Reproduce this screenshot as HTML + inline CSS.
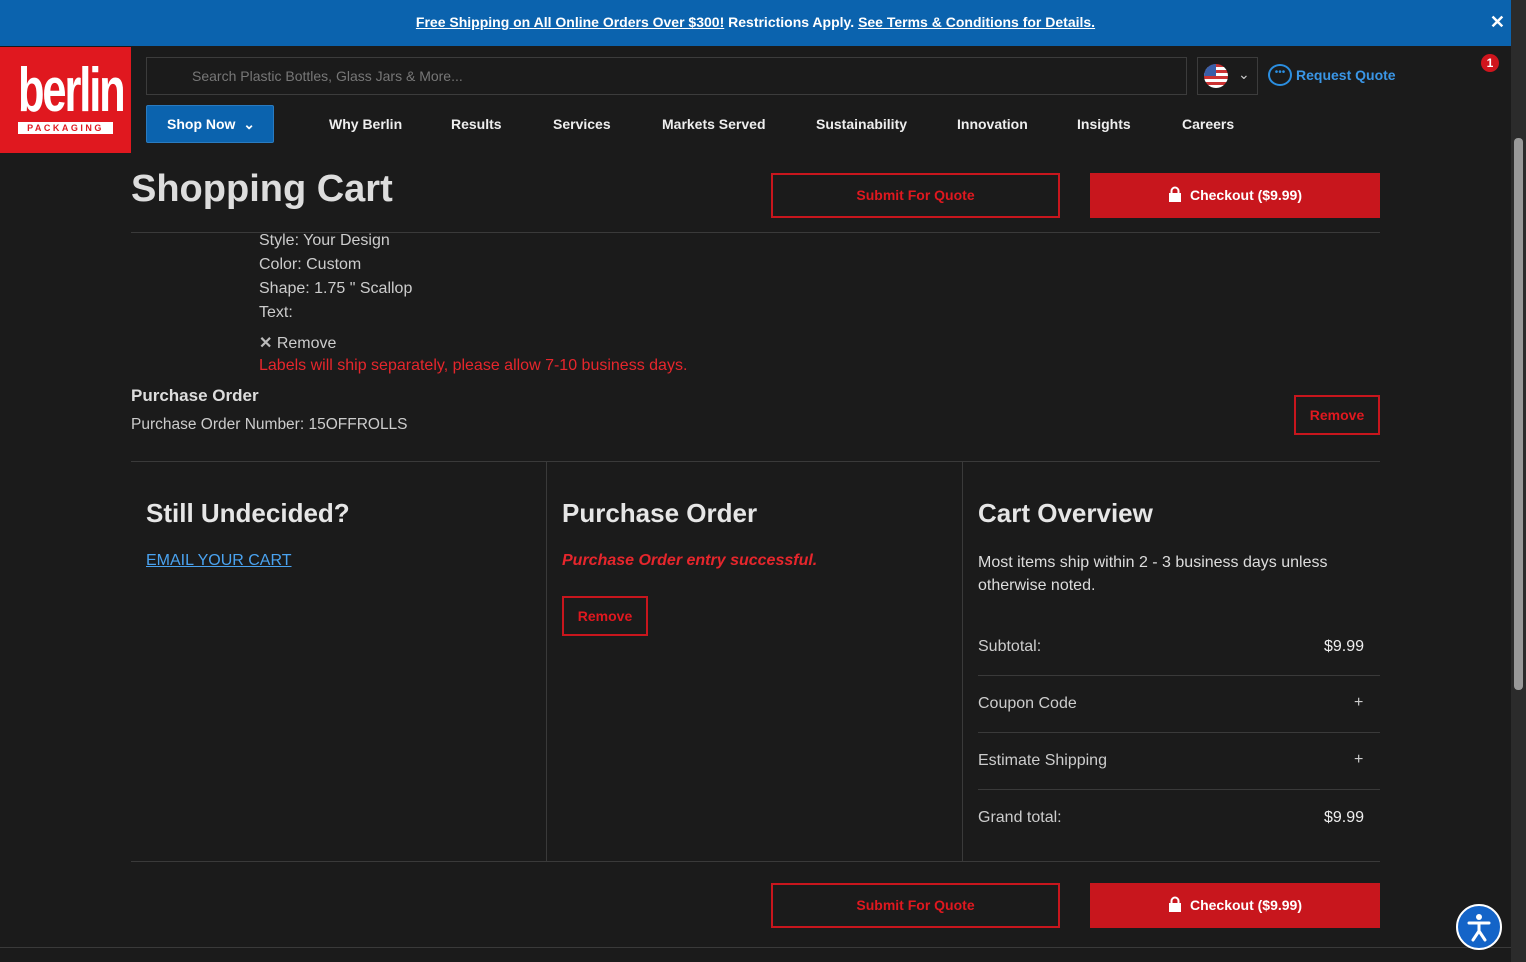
<!DOCTYPE html>
<html><head><meta charset="utf-8"><style>
*{margin:0;padding:0;box-sizing:border-box}
body{width:1526px;height:962px;overflow:hidden;background:#1b1b1b;font-family:"Liberation Sans",Arial,sans-serif;color:#ddd;position:relative}
.a{position:absolute}
.top{left:0;top:0;width:1511px;height:46px;background:#0b63ae;color:#fff;font-weight:bold;font-size:14px;text-align:center;line-height:44px}
.top u{text-decoration:underline}
.logo{left:0;top:47px;width:131px;height:106px;background:#e0181f}
.btnw{border:2px solid #c8161d;color:#e0181f;font-weight:bold;font-size:14px;text-align:center;background:transparent}
.btnr{background:#c8161d;color:#fff;font-weight:bold;font-size:14px;text-align:center}
.nav{top:116px;font-weight:bold;font-size:14px;color:#eee}
.line{height:1px;background:#3a3a3a}
.t{font-size:16px;color:#ccc}
h2{font-size:26px;color:#e6e6e6;font-weight:bold}
.lk{display:inline-block;vertical-align:-2px;margin-right:8px}
</style></head><body>
<div class="a top"><u>Free Shipping on All Online Orders Over $300!</u> Restrictions Apply. <u>See Terms &amp; Conditions for Details.</u><span style="position:absolute;right:6px;top:0;font-size:18px">✕</span></div>
<div class="a" style="left:1511px;top:0;width:15px;height:962px;background:#2b2b2b"></div>
<div class="a" style="left:1514px;top:138px;width:9px;height:552px;background:#999;border-radius:4px"></div>
<div class="a logo"><div class="a" style="left:18px;top:8px;font-size:62px;font-weight:bold;color:#fff;letter-spacing:-3px;transform:scaleX(0.7);transform-origin:left">berlin</div><div class="a" style="left:18px;top:75px;width:95px;height:12px;background:#fff;color:#e0181f;font-size:9px;font-weight:bold;letter-spacing:2.5px;text-align:center;line-height:12px">PACKAGING</div></div>
<div class="a" style="left:146px;top:57px;width:1041px;height:38px;border:1px solid #3c3c3c;color:#777;font-size:14px;line-height:36px;padding-left:45px">Search Plastic Bottles, Glass Jars &amp; More...</div>
<div class="a" style="left:1197px;top:57px;width:61px;height:38px;border:1px solid #3c3c3c"><div class="a" style="left:6px;top:6px;width:24px;height:24px;border-radius:50%;overflow:hidden;background:repeating-linear-gradient(#c33 0 3px,#fff 3px 6px)"><div style="width:12px;height:12px;background:#3a5ea8"></div></div><span class="a" style="left:40px;top:8px;color:#ccc;font-size:14px">⌄</span></div>
<div class="a" style="left:1268px;top:64px;width:24px;height:22px;border:2px solid #2b8ee0;border-radius:50%;color:#2b8ee0;font-size:10px;text-align:center;line-height:14px">•••</div>
<div class="a" style="left:1296px;top:67px;color:#3a96e6;font-weight:bold;font-size:14px">Request Quote</div>
<div class="a" style="left:1481px;top:54px;width:18px;height:18px;border-radius:50%;background:#d0151d;color:#fff;font-size:12px;font-weight:bold;text-align:center;line-height:18px">1</div>
<div class="a" style="left:146px;top:105px;width:128px;height:38px;background:#0b63ae;border:1px solid #2a7bc0;border-radius:2px;color:#fff;font-weight:bold;font-size:14px;line-height:36px;padding-left:20px">Shop Now &nbsp;⌄</div>
<div class="a nav" style="left:329px">Why Berlin</div><div class="a nav" style="left:451px">Results</div><div class="a nav" style="left:553px">Services</div><div class="a nav" style="left:662px">Markets Served</div><div class="a nav" style="left:816px">Sustainability</div><div class="a nav" style="left:957px">Innovation</div><div class="a nav" style="left:1077px">Insights</div><div class="a nav" style="left:1182px">Careers</div>
<div class="a" style="left:131px;top:168px;font-size:38px;font-weight:bold;color:#ddd">Shopping Cart</div>
<div class="a btnw" style="left:771px;top:173px;width:289px;height:45px;line-height:41px">Submit For Quote</div>
<div class="a btnr" style="left:1090px;top:173px;width:290px;height:45px;line-height:45px"><svg class="lk" width="14" height="16" viewBox="0 0 14 16"><path d="M3.5 7V5a3.5 3.5 0 0 1 7 0v2" fill="none" stroke="#fff" stroke-width="2"/><rect x="1" y="7" width="12" height="9" fill="#fff"/></svg>Checkout ($9.99)</div>
<div class="a line" style="left:131px;top:232px;width:1249px"></div>
<div class="a t" style="left:259px;top:229px;line-height:24px">Style: Your Design<br>Color: Custom<br>Shape: 1.75 " Scallop<br>Text:</div>
<div class="a t" style="left:259px;top:333px"><b style="color:#bbb">✕</b> Remove</div>
<div class="a" style="left:259px;top:357px;font-size:16px;color:#e6262c">Labels will ship separately, please allow 7-10 business days.</div>
<div class="a" style="left:131px;top:386px;font-size:17px;font-weight:bold;color:#ddd">Purchase Order</div>
<div class="a t" style="left:131px;top:416px;font-size:15.5px">Purchase Order Number: 15OFFROLLS</div>
<div class="a btnw" style="left:1294px;top:395px;width:86px;height:40px;line-height:36px">Remove</div>
<div class="a line" style="left:131px;top:461px;width:1249px"></div>
<div class="a" style="left:546px;top:462px;width:1px;height:400px;background:#3a3a3a"></div>
<div class="a" style="left:962px;top:462px;width:1px;height:400px;background:#3a3a3a"></div>
<h2 class="a" style="left:146px;top:498px">Still Undecided?</h2>
<div class="a" style="left:146px;top:552px;font-size:16px;color:#4aa3f0;text-decoration:underline">EMAIL YOUR CART</div>
<h2 class="a" style="left:562px;top:498px">Purchase Order</h2>
<div class="a" style="left:562px;top:552px;font-size:16px;color:#e6262c;font-weight:bold;font-style:italic">Purchase Order entry successful.</div>
<div class="a btnw" style="left:562px;top:596px;width:86px;height:40px;line-height:36px">Remove</div>
<h2 class="a" style="left:978px;top:498px">Cart Overview</h2>
<div class="a t" style="left:978px;top:551px;line-height:23px;color:#ddd">Most items ship within 2 - 3 business days unless<br>otherwise noted.</div>
<div class="a t" style="left:978px;top:638px">Subtotal:</div><div class="a t" style="left:1324px;top:638px;color:#eee">$9.99</div>
<div class="a line" style="left:978px;top:675px;width:402px"></div>
<div class="a t" style="left:978px;top:695px">Coupon Code</div><div class="a t" style="left:1354px;top:694px">+</div>
<div class="a line" style="left:978px;top:732px;width:402px"></div>
<div class="a t" style="left:978px;top:752px">Estimate Shipping</div><div class="a t" style="left:1354px;top:751px">+</div>
<div class="a line" style="left:978px;top:789px;width:402px"></div>
<div class="a t" style="left:978px;top:809px">Grand total:</div><div class="a t" style="left:1324px;top:809px;color:#eee">$9.99</div>
<div class="a line" style="left:131px;top:861px;width:1249px"></div>
<div class="a btnw" style="left:771px;top:883px;width:289px;height:45px;line-height:41px">Submit For Quote</div>
<div class="a btnr" style="left:1090px;top:883px;width:290px;height:45px;line-height:45px"><svg class="lk" width="14" height="16" viewBox="0 0 14 16"><path d="M3.5 7V5a3.5 3.5 0 0 1 7 0v2" fill="none" stroke="#fff" stroke-width="2"/><rect x="1" y="7" width="12" height="9" fill="#fff"/></svg>Checkout ($9.99)</div>
<div class="a line" style="left:0;top:947px;width:1511px"></div>
<div class="a" style="left:1456px;top:904px;width:46px;height:46px;border-radius:50%;background:#1464c8;border:2px solid #fff"><svg width="42" height="42" viewBox="0 0 42 42"><circle cx="21" cy="11" r="3" fill="#fff"/><path d="M11 17h20M21 17v8l-6 9M21 25l6 9" stroke="#fff" stroke-width="3" fill="none" stroke-linecap="round"/></svg></div>
</body></html>
